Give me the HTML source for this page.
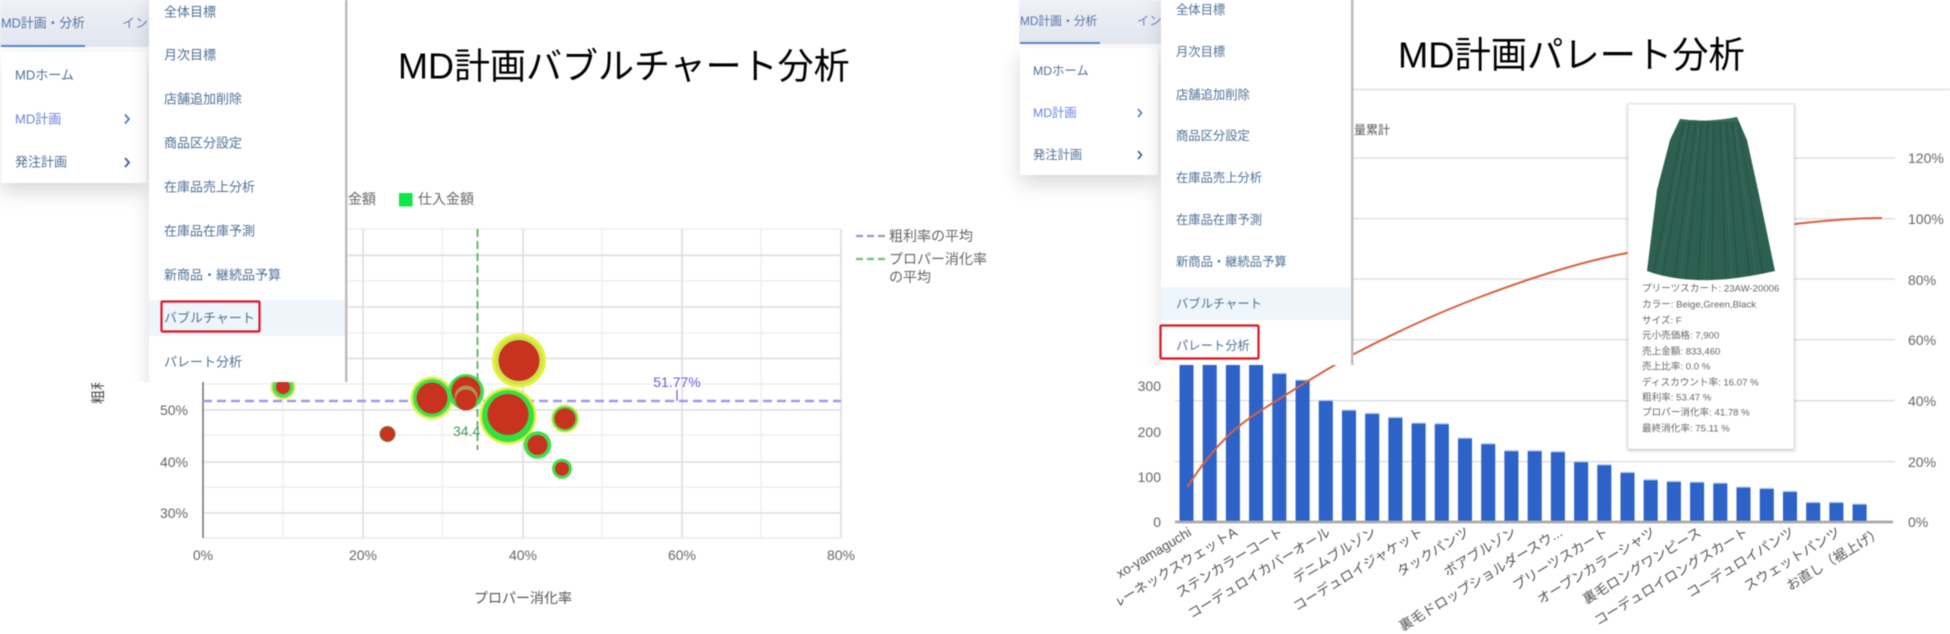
<!DOCTYPE html>
<html lang="ja">
<head>
<meta charset="utf-8">
<title>MD計画分析</title>
<style>
html,body{margin:0;padding:0;background:#fff;width:1950px;height:634px;overflow:hidden}
svg{display:block;position:absolute;left:0;top:0;filter:blur(.65px)}
text{font-family:"Liberation Sans","Noto Sans CJK JP",sans-serif;dominant-baseline:central}
.t{fill:#666;font-size:14px}
.m{fill:#4f7196;font-size:13px}
.n{fill:#4f7196;font-size:13px}
.r{fill:#4f7196;font-size:12.3px}
.tip{fill:#666;font-size:9.6px}
.xl{fill:#555;font-size:13.6px;text-anchor:end}
</style>
</head>
<body>
<svg width="1950" height="634" viewBox="0 0 1950 634" xmlns="http://www.w3.org/2000/svg">
<defs>
<filter id="sh" x="-30%" y="-30%" width="160%" height="170%"><feDropShadow dx="0" dy="8" stdDeviation="10" flood-color="#000" flood-opacity=".16"/></filter>
<filter id="sl" x="-30%" y="-10%" width="140%" height="120%"><feDropShadow dx="-3" dy="0" stdDeviation="8" flood-color="#000" flood-opacity=".1"/></filter>
<filter id="ts" x="-10%" y="-10%" width="120%" height="120%"><feDropShadow dx="0" dy="1" stdDeviation="1.5" flood-color="#000" flood-opacity=".25"/></filter>
<linearGradient id="nav" x1="0" y1="0" x2="0" y2="1"><stop offset="0" stop-color="#eef1f6"/><stop offset="1" stop-color="#e2e6ef"/></linearGradient>
<clipPath id="xc"><rect x="1117" y="520" width="833" height="114"/></clipPath>
<clipPath id="pl"><rect x="0" y="0" width="347" height="382"/></clipPath>
<clipPath id="pr"><rect x="1019" y="0" width="334" height="365"/></clipPath>
<clipPath id="sk"><path d="M1680 119 Q1708 123 1737 117 L1747 140 L1758 190 L1775 271 Q1740 279 1712 280 Q1675 281 1647 271 L1657 190 L1670 140Z"/></clipPath>
<g id="bars">
<rect x="1179.5" y="365" width="14" height="157"/><rect x="1202.7" y="365" width="14" height="157"/><rect x="1225.9" y="365" width="14" height="157"/><rect x="1249.1" y="365" width="14" height="157"/><rect x="1272.3" y="374" width="14" height="148"/><rect x="1295.6" y="380.7" width="14" height="141.3"/><rect x="1318.8" y="401" width="14" height="121"/><rect x="1342" y="410.7" width="14" height="111.3"/><rect x="1365.2" y="414" width="14" height="108"/><rect x="1388.4" y="418" width="14" height="104"/><rect x="1411.6" y="423.7" width="14" height="98.3"/><rect x="1434.8" y="424.3" width="14" height="97.7"/><rect x="1458" y="438.7" width="14" height="83.3"/><rect x="1481.2" y="444.3" width="14" height="77.7"/><rect x="1504.4" y="451.3" width="14" height="70.7"/><rect x="1527.7" y="451.3" width="14" height="70.7"/><rect x="1550.9" y="452.3" width="14" height="69.7"/><rect x="1574.1" y="462.3" width="14" height="59.7"/><rect x="1597.3" y="465.3" width="14" height="56.7"/><rect x="1620.5" y="473" width="14" height="49"/><rect x="1643.7" y="480.3" width="14" height="41.7"/><rect x="1666.9" y="482" width="14" height="40"/><rect x="1690.1" y="482.7" width="14" height="39.3"/><rect x="1713.3" y="483.7" width="14" height="38.3"/><rect x="1736.5" y="487.7" width="14" height="34.3"/><rect x="1759.8" y="489" width="14" height="33"/><rect x="1783" y="492" width="14" height="30"/><rect x="1806.2" y="503" width="14" height="19"/><rect x="1829.4" y="503" width="14" height="19"/><rect x="1852.6" y="504.7" width="14" height="17.3"/>
</g>
</defs>

<rect width="1950" height="634" fill="#fff"/>

<!-- LEFT CHART -->
<g stroke="#efefef" stroke-width="1.5" fill="none">
<path d="M203 229H841M203 281H841M203 333H841M203 384H841M203 435H841M203 487H841"/>
<path d="M283 229V538M442.500 229V538M602 229V538M761 229V538"/>
</g>
<g stroke="#dedede" stroke-width="1.6" fill="none">
<path d="M203 255.300H841M203 307H841M203 358.500H841M203 410H841M203 462H841M203 513H841"/>
<path d="M363 229V538M523 229V538M682 229V538M841 229V538"/>
</g>
<path d="M203 538H841" stroke="#eaeaea" stroke-width="1.5"/>
<path d="M203 382V538" stroke="#777" stroke-width="1.6"/>

<path d="M477.500 229V450" stroke="#4aa84a" stroke-width="1.6" stroke-dasharray="8 4" fill="none"/>
<path d="M203 401H841" stroke="#a198ea" stroke-width="2.6" stroke-dasharray="9 5" fill="none"/>
<path d="M677 390V401" stroke="#6a5ae8" stroke-width="1.2"/>
<text x="677" y="382" font-size="14" fill="#6a5ce6" text-anchor="middle">51.77%</text>
<text x="453" y="431" font-size="14" fill="#3f9a55">34.4</text>

<!-- bubbles -->
<g>
<circle cx="283" cy="387" r="12.500" fill="#d8ec60"/><circle cx="283" cy="387" r="10.500" fill="#52dc58"/><circle cx="283" cy="387" r="7" fill="#c8331f"/>
<circle cx="387.500" cy="434" r="8" fill="#6a7a3a"/><circle cx="387.500" cy="434" r="7" fill="#c8331f"/>
<circle cx="432" cy="398" r="21.500" fill="#dff04a"/><circle cx="432" cy="398" r="19" fill="#3fe04c"/><circle cx="432" cy="398" r="15.500" fill="#c8331f"/>
<circle cx="466" cy="392" r="18" fill="#3fe04c"/><circle cx="466" cy="391" r="14.500" fill="#c8331f"/><circle cx="466" cy="397" r="11.500" fill="#b2945a"/><circle cx="466" cy="400" r="10.500" fill="#c8331f"/>
<circle cx="519" cy="360.500" r="27" fill="#e6f03c"/><circle cx="519" cy="360.500" r="24" fill="#c9e44a"/><circle cx="519" cy="360.500" r="20.500" fill="#c8331f"/>
<circle cx="508" cy="416" r="28.500" fill="#e6f03c"/><circle cx="508" cy="416" r="26" fill="#33e044"/><circle cx="508" cy="414.500" r="20.500" fill="#c8331f"/>
<circle cx="565" cy="418.700" r="14" fill="#dff04a"/><circle cx="565" cy="418.700" r="12.500" fill="#50de50"/><circle cx="565" cy="418.700" r="10.500" fill="#c8331f"/>
<circle cx="537.500" cy="445" r="13.800" fill="#3fe04c"/><circle cx="537.500" cy="445" r="10" fill="#c8331f"/>
<circle cx="562" cy="468.700" r="10" fill="#3fe04c"/><circle cx="562" cy="468.700" r="7" fill="#c8331f"/>
</g>

<g class="t">
<text x="188" y="410" text-anchor="end" class="t">50%</text>
<text x="188" y="462" text-anchor="end" class="t">40%</text>
<text x="188" y="513" text-anchor="end" class="t">30%</text>
<text x="203" y="555" text-anchor="middle" class="t">0%</text>
<text x="363" y="555" text-anchor="middle" class="t">20%</text>
<text x="523" y="555" text-anchor="middle" class="t">40%</text>
<text x="682" y="555" text-anchor="middle" class="t">60%</text>
<text x="841" y="555" text-anchor="middle" class="t">80%</text>
<text x="523" y="598" text-anchor="middle" class="t" style="fill:#555">プロパー消化率</text>
<text transform="translate(98 383) rotate(-90)" text-anchor="middle" class="t" style="fill:#444">粗利率</text>
</g>

<!-- left overlays -->
<rect x="0" y="0" width="347" height="382" fill="#fff"/>
<rect x="1" y="52" width="146" height="131" fill="#fff" filter="url(#sh)"/>
<rect x="0" y="0" width="149" height="47" fill="url(#nav)"/>
<rect x="1" y="45" width="84" height="2" fill="#5b86d0"/>
<text x="1" y="23" font-size="12.800" fill="#5474a8">MD計画・分析</text>
<text x="122" y="23" font-size="13" fill="#6a86c0">イン</text>
<text x="15" y="75" class="n">MDホーム</text>
<text x="15" y="119" class="n" style="fill:#6a84d8">MD計画</text>
<text x="15" y="162" class="n">発注計画</text>
<path d="M125 114.500l4 4.500-4 4.500" stroke="#4f7bc0" stroke-width="1.800" fill="none"/>
<path d="M125 158l4 4.500-4 4.500" stroke="#3c5f90" stroke-width="1.800" fill="none"/>

<g clip-path="url(#pl)"><rect x="149" y="0" width="196" height="400" fill="#fff" filter="url(#sl)"/></g>
<rect x="149" y="300" width="196" height="36" fill="#eef6fc"/>
<rect x="345" y="0" width="2.500" height="382" fill="#bdbdbd"/>
<text x="164" y="12" class="m">全体目標</text>
<text x="164" y="55" class="m">月次目標</text>
<text x="164" y="99" class="m">店舗追加削除</text>
<text x="164" y="143" class="m">商品区分設定</text>
<text x="164" y="187" class="m">在庫品売上分析</text>
<text x="164" y="231" class="m">在庫品在庫予測</text>
<text x="164" y="275" class="m">新商品・継続品予算</text>
<text x="164" y="318" class="m">バブルチャート</text>
<text x="164" y="362" class="m">パレート分析</text>
<rect x="161.500" y="301.500" width="98" height="30" fill="none" stroke="#dc1626" stroke-width="2.200" rx="1"/>

<!-- left legend / title -->
<text x="348" y="199" class="t">金額</text>
<rect x="399" y="193" width="13.500" height="13.500" fill="#0ee64a"/>
<text x="418" y="199" class="t">仕入金額</text>
<path d="M856 236H885" stroke="#9a90e8" stroke-width="2.200" stroke-dasharray="7 4"/>
<text x="889" y="236" class="t">粗利率の平均</text>
<path d="M856 259H885" stroke="#6cc07c" stroke-width="2.200" stroke-dasharray="7 4"/>
<text x="889" y="259" class="t">プロパー消化率</text>
<text x="889" y="277" class="t">の平均</text>
<text x="398" y="66" font-size="36" fill="#000">MD計画バブルチャート分析</text>

<!-- RIGHT CHART -->
<path d="M1353 89.500H1950" stroke="#e2e2e2" stroke-width="1.500"/>
<g stroke="#e0e0e0" stroke-width="1.500" fill="none">
<path d="M1353 158H1895M1353 218.700H1895M1353 279H1895M1353 339.700H1895M1175 400.700H1895M1175 461.700H1895"/>
</g>
<use href="#bars" y="-1.200" fill="#b4cdf2"/>
<use href="#bars" fill="#2d62c8"/>
<path d="M1175 522H1893" stroke="#aaa" stroke-width="2.800"/>
<path fill="none" stroke="#d9603f" stroke-width="2" d="M1187.6 486.700C1200 467 1215 448 1230 434C1245 420 1260 411 1276 401C1295 389 1315 376 1352 355C1400 330 1440 312 1480 297C1530 278 1580 262 1627 253C1690 240 1740 229 1795 224C1830 220 1860 218 1882 218"/>

<g>
<text x="1161" y="386" text-anchor="end" class="t">300</text>
<text x="1161" y="432" text-anchor="end" class="t">200</text>
<text x="1161" y="477" text-anchor="end" class="t">100</text>
<text x="1161" y="522" text-anchor="end" class="t">0</text>
<text x="1908" y="158" class="t">120%</text>
<text x="1908" y="219" class="t">100%</text>
<text x="1908" y="280" class="t">80%</text>
<text x="1908" y="340" class="t">60%</text>
<text x="1908" y="401" class="t">40%</text>
<text x="1908" y="462" class="t">20%</text>
<text x="1908" y="522" class="t">0%</text>
</g>

<g clip-path="url(#xc)">
<text class="xl" transform="translate(1190 531) rotate(-31)">xo-yamaguchi</text>
<text class="xl" transform="translate(1236 531) rotate(-31)">クルーネックスウェットA</text>
<text class="xl" transform="translate(1282 531) rotate(-31)">ステンカラーコート</text>
<text class="xl" transform="translate(1329 531) rotate(-31)">コーデュロイカバーオール</text>
<text class="xl" transform="translate(1375 531) rotate(-31)">デニムブルゾン</text>
<text class="xl" transform="translate(1422 531) rotate(-31)">コーデュロイジャケット</text>
<text class="xl" transform="translate(1468 531) rotate(-31)">タックパンツ</text>
<text class="xl" transform="translate(1515 531) rotate(-31)">ボアブルゾン</text>
<text class="xl" transform="translate(1561 531) rotate(-31)">裏毛ドロップショルダースウ...</text>
<text class="xl" transform="translate(1607 531) rotate(-31)">プリーツスカート</text>
<text class="xl" transform="translate(1654 531) rotate(-31)">オープンカラーシャツ</text>
<text class="xl" transform="translate(1700 531) rotate(-31)">裏毛ロングワンピース</text>
<text class="xl" transform="translate(1747 531) rotate(-31)">コーデュロイロングスカート</text>
<text class="xl" transform="translate(1793 531) rotate(-31)">コーデュロイパンツ</text>
<text class="xl" transform="translate(1839 531) rotate(-31)">スウェットパンツ</text>
<text class="xl" transform="translate(1881 531) rotate(-31)">お直し（裾上げ）</text>
</g>

<!-- tooltip -->
<rect x="1628" y="104" width="166" height="345" fill="#fff" stroke="#e2e2e2" filter="url(#ts)"/>
<path d="M1680 119 Q1708 123 1737 117 L1747 140 L1758 190 L1775 271 Q1740 279 1712 280 Q1675 281 1647 271 L1657 190 L1670 140Z" fill="#2e6051"/>
<g clip-path="url(#sk)" fill="none" stroke="#285347" stroke-width="1.300">
<path d="M1684 120L1652 280M1690 120L1662 280M1696 120L1674 280M1702 120L1686 280M1708 120L1698 280M1714 120L1712 280M1720 120L1726 280M1726 120L1738 280M1732 120L1750 280M1738 120L1764 280"/>
<path d="M1680 120H1738" stroke="#3a6d5d" stroke-width="3"/>
<path d="M1687 125L1657 280M1699 125L1680 280M1711 125L1705 280M1723 125L1732 280M1735 125L1757 280" stroke="#386a5a" stroke-width="1"/>
</g>
<text x="1642" y="289" class="tip">プリーツスカート: 23AW-20006</text>
<text x="1642" y="305" class="tip">カラー: Beige,Green,Black</text>
<text x="1642" y="321" class="tip">サイズ: F</text>
<text x="1642" y="336" class="tip">元小売価格: 7,900</text>
<text x="1642" y="352" class="tip">売上金額: 833,460</text>
<text x="1642" y="367" class="tip">売上比率: 0.0 %</text>
<text x="1642" y="383" class="tip">ディスカウント率: 16.07 %</text>
<text x="1642" y="398" class="tip">粗利率: 53.47 %</text>
<text x="1642" y="413" class="tip">プロパー消化率: 41.78 %</text>
<text x="1642" y="429" class="tip">最終消化率: 75.11 %</text>

<!-- right overlays -->
<rect x="1020" y="48" width="138" height="127" fill="#fff" filter="url(#sh)"/>
<rect x="1019" y="0" width="143" height="44" fill="url(#nav)"/>
<rect x="1020" y="42" width="80" height="2" fill="#5b86d0"/>
<text x="1020" y="21" font-size="11.800" fill="#5474a8">MD計画・分析</text>
<text x="1137" y="21" font-size="12.300" fill="#6a86c0">イン</text>
<text x="1033" y="71" font-size="12.300" fill="#4f7196">MDホーム</text>
<text x="1033" y="113" font-size="12.300" fill="#6a84d8">MD計画</text>
<text x="1033" y="155" font-size="12.300" fill="#4f7196">発注計画</text>
<path d="M1138 109l3.500 4-3.500 4" stroke="#4f7bc0" stroke-width="1.700" fill="none"/>
<path d="M1138 151l3.500 4-3.500 4" stroke="#3c5f90" stroke-width="1.700" fill="none"/>

<g clip-path="url(#pr)"><rect x="1161" y="0" width="190" height="385" fill="#fff" filter="url(#sl)"/></g>
<rect x="1161" y="287" width="190" height="33" fill="#eef6fc"/>
<rect x="1351" y="0" width="2.500" height="365" fill="#bdbdbd"/>
<text x="1176" y="10" class="r">全体目標</text>
<text x="1176" y="52" class="r">月次目標</text>
<text x="1176" y="95" class="r">店舗追加削除</text>
<text x="1176" y="136" class="r">商品区分設定</text>
<text x="1176" y="178" class="r">在庫品売上分析</text>
<text x="1176" y="220" class="r">在庫品在庫予測</text>
<text x="1176" y="262" class="r">新商品・継続品予算</text>
<text x="1176" y="304" class="r">バブルチャート</text>
<text x="1176" y="346" class="r">パレート分析</text>
<rect x="1160.500" y="325.500" width="98" height="33" fill="none" stroke="#dc1626" stroke-width="2.200" rx="1"/>

<text x="1354" y="130" font-size="12" fill="#555">量累計</text>
<text x="1398" y="55" font-size="36.300" fill="#000">MD計画パレート分析</text>
</svg>
</body>
</html>
